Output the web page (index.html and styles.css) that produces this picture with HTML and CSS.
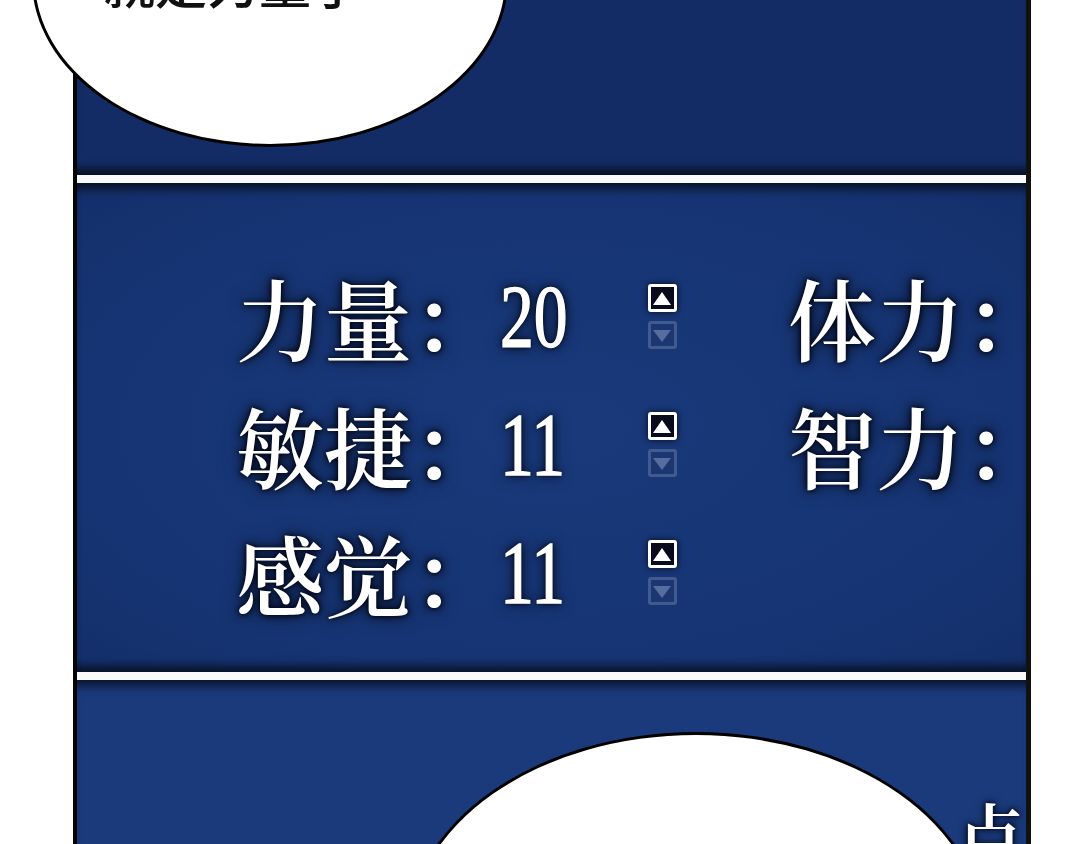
FILE: index.html
```html
<!DOCTYPE html>
<html lang="zh-CN">
<head>
    <meta charset="UTF-8">
    <meta name="viewport" content="width=device-width, initial-scale=1.0">
    <title>属性面板</title>
    <link rel="stylesheet" href="styles.css">
</head>
<body>
    <div class="page">
        <div class="strip">
            <div class="panel panel-top"></div>
            <div class="rule"></div>
            <div class="panel panel-stats">
                <div class="stats">
                    <div class="label">力量：</div>
                    <div class="value"><span>20</span></div>
                    <div class="arrows">
                        <span class="btn up"></span>
                        <span class="btn down"></span>
                    </div>
                    <div class="label side">体力：</div>

                    <div class="label">敏捷：</div>
                    <div class="value"><span>11</span></div>
                    <div class="arrows">
                        <span class="btn up"></span>
                        <span class="btn down"></span>
                    </div>
                    <div class="label side">智力：</div>

                    <div class="label">感觉：</div>
                    <div class="value"><span>11</span></div>
                    <div class="arrows">
                        <span class="btn up"></span>
                        <span class="btn down"></span>
                    </div>
                    <div></div>
                </div>
            </div>
            <div class="rule"></div>
            <div class="panel panel-bottom"></div>
        </div>

        <!-- speech bubbles sit over the panels -->
        <div class="bubble bubble-top">
            <div class="bubble-text">就是力量了</div>
        </div>
        <div class="bubble bubble-bottom"></div>
        <div class="caption">点</div>
    </div>
</body>
</html>
```

FILE: styles.css
```css
* {
    margin: 0;
    padding: 0;
    box-sizing: border-box;
}

body {
    background: #fff;
    font-family: "Noto Serif CJK SC", "Noto Sans CJK SC", serif;
}

.page {
    position: relative;
    width: 1080px;
    height: 844px;
    overflow: hidden;
    background: #fff;
}

.strip {
    margin-left: 73px;
    width: 958px;
    height: 844px;
    border-left: 4px solid #050505;
    border-right: 5px solid #111;
    display: flex;
    flex-direction: column;
}

.panel {
    background: #163574;
}

.panel-top {
    height: 175px;
    background: #142c65;
    box-shadow: inset 0 -12px 10px -6px rgba(0, 0, 0, 0.7);
}

.panel-stats {
    height: 489px;
    padding: 69px 0 0 159px;
    background: radial-gradient(ellipse at 50% 50%, #19397a 0%, #163473 70%, #142f6a 100%);
    box-shadow: inset 0 12px 10px -6px rgba(0, 0, 0, 0.65),
                inset 0 -12px 10px -6px rgba(0, 0, 0, 0.65);
}

.panel-bottom {
    flex: 1;
    background: #1a3a7b;
    box-shadow: inset 0 12px 10px -6px rgba(0, 0, 0, 0.65);
}

.rule {
    height: 8px;
    background: #fafafa;
}

.stats {
    display: grid;
    grid-template-columns: 264px 148px 29px 1fr;
    grid-auto-rows: 128px;
    align-items: center;
    color: #fff;
}

.label {
    font-size: 88px;
    font-weight: 600;
    line-height: 1;
    white-space: nowrap;
    text-shadow: 0 0 4px #01040f, 0 0 10px rgba(0, 2, 12, 0.9), 0 0 18px rgba(0, 0, 0, 0.5);
}

.label.side {
    padding-left: 111px;
}

.value {
    font-family: "Liberation Serif", serif;
    font-size: 89px;
    line-height: 1;
}

.value span {
    display: inline-block;
    transform: scaleX(0.76);
    transform-origin: left center;
    -webkit-text-stroke: 1.5px #fff;
    text-shadow: 0 0 4px #01040f, 0 0 10px rgba(0, 2, 12, 0.9), 0 0 18px rgba(0, 0, 0, 0.5);
}

.arrows {
    display: flex;
    flex-direction: column;
    gap: 9px;
}

.btn {
    position: relative;
    display: block;
    width: 29px;
    height: 28px;
    border-radius: 3px;
}

.btn::after {
    content: "";
    position: absolute;
    width: 0;
    height: 0;
    border-left: 9.5px solid transparent;
    border-right: 9.5px solid transparent;
}

.btn.up {
    border: 3px solid #fff;
    background: #070b1c;
    box-shadow: 0 0 6px rgba(0, 0, 0, 0.8);
}

.btn.up::after {
    left: 2px;
    top: 5px;
    border-bottom: 13px solid #fff;
}

.btn.down {
    border: 3px solid #435a8f;
    background: #1c3672;
}

.btn.down::after {
    left: 2px;
    top: 6px;
    border-top: 12px solid #566d9f;
}

.bubble {
    position: absolute;
    background: #fff;
    border: 3px solid #000;
    border-radius: 50%;
}

.bubble-top {
    left: 32px;
    top: -187px;
    width: 476px;
    height: 334px;
}

.bubble-text {
    position: absolute;
    left: 68px;
    top: 140px;
    font-family: "Noto Sans CJK SC", sans-serif;
    font-weight: 500;
    font-size: 52px;
    line-height: 52px;
    color: #111;
    white-space: nowrap;
}

.bubble-bottom {
    left: 406px;
    top: 732px;
    width: 580px;
    height: 408px;
}

.caption {
    position: absolute;
    left: 955px;
    top: 798px;
    font-size: 70px;
    font-weight: 600;
    line-height: 1;
    color: #fff;
    text-shadow: 0 0 4px #01040f, 0 0 10px rgba(0, 2, 12, 0.9);
}
```
